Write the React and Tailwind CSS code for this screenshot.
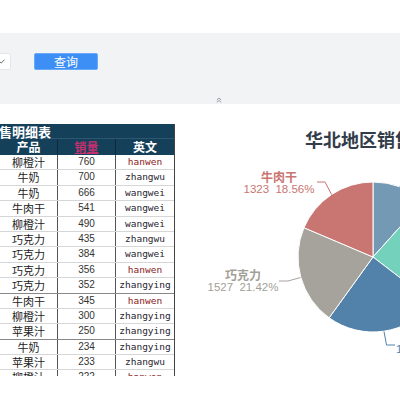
import React from "react";

const rows = [
  ["柳橙汁", 760, "hanwen"],
  ["牛奶", 700, "zhangwu"],
  ["牛奶", 666, "wangwei"],
  ["牛肉干", 541, "wangwei"],
  ["柳橙汁", 490, "wangwei"],
  ["巧克力", 435, "zhangwu"],
  ["巧克力", 384, "wangwei"],
  ["巧克力", 356, "hanwen"],
  ["巧克力", 352, "zhangying"],
  ["牛肉干", 345, "hanwen"],
  ["柳橙汁", 300, "zhangying"],
  ["苹果汁", 250, "zhangying"],
  ["牛奶", 234, "zhangying"],
  ["苹果汁", 233, "zhangwu"],
  ["柳橙汁", 222, "hanwen"],
];

// pie slices, angles clockwise from 12 o'clock
const slices = [
  { from: 0, to: 42, color: "#7499b4" },
  { from: 42, to: 127.5, color: "#74d1bc" },
  { from: 127.5, to: 215.8, color: "#5282aa" },
  { from: 215.8, to: 293, color: "#a5a39b" },
  { from: 293, to: 360, color: "#c97571" },
];

const CX = 193;
const CY = 153;
const R = 75;

function pt(angle, r = R) {
  const a = (angle * Math.PI) / 180;
  return [CX + r * Math.sin(a), CY - r * Math.cos(a)];
}

function slicePath(s) {
  const [x1, y1] = pt(s.from);
  const [x2, y2] = pt(s.to);
  const large = s.to - s.from > 180 ? 1 : 0;
  return `M${CX} ${CY} L${x1} ${y1} A${R} ${R} 0 ${large} 1 ${x2} ${y2} Z`;
}

function Chart() {
  return (
    <svg width="220" height="296" className="block">
      <text x="125" y="43" fontSize="18" fontWeight="700" fill="#333d4a" fontFamily="'Noto Sans CJK SC', sans-serif">
        华北地区销售情况
      </text>
      {slices.map((s) => (
        <path key={s.from} d={slicePath(s)} fill={s.color} stroke="#fff" strokeWidth="1" />
      ))}
      {/* label lines */}
      <polyline points="151.6,90.5 145,78 137,78" fill="none" stroke="#c97571" strokeWidth="1" />
      <polyline points="120.5,173.5 108,177 99,177" fill="none" stroke="#a5a39b" strokeWidth="1" />
      <polyline points="204,227.5 206.5,241 215,241" fill="none" stroke="#5282aa" strokeWidth="1" />
      <polyline points="220,83 223,71" fill="none" stroke="#7499b4" strokeWidth="1" />
      {/* labels */}
      <g textAnchor="middle">
        <text x="99" y="78" fontSize="12" fontWeight="700" fill="#c97571" fontFamily="'Noto Sans CJK SC', sans-serif">牛肉干</text>
        <text x="99" y="89" fontSize="11.5" fill="#c97571" fontFamily="'Liberation Sans', sans-serif" xmlSpace="preserve">1323  18.56%</text>
        <text x="63" y="176" fontSize="12" fontWeight="700" fill="#a29f97" fontFamily="'Noto Sans CJK SC', sans-serif">巧克力</text>
        <text x="63" y="187" fontSize="11.5" fill="#a29f97" fontFamily="'Liberation Sans', sans-serif" xmlSpace="preserve">1527  21.42%</text>
      </g>
      <text x="216" y="249" fontSize="11.5" fill="#5282aa" fontFamily="'Liberation Sans', sans-serif" xmlSpace="preserve">1750  24.55%</text>
    </svg>
  );
}

function DataTable() {
  return (
    <div className="w-[175px] h-[252px] overflow-hidden border-r border-[#444]">
      <div className="h-[15px] bg-[#15405a] text-white text-[13px] font-bold leading-[15px] whitespace-nowrap border-b border-[#2c5671]">
        <span className="ml-[-14px]">销售明细表</span>
      </div>
      <div className="grid grid-cols-[58px_58px_58px] h-[16px] bg-[#15405a] text-[12px] font-bold leading-[16px] text-center">
        <div className="text-white border-r border-[#0d2a3d]">产品</div>
        <div className="text-[#c2306f] underline border-r border-[#0d2a3d]">销量</div>
        <div className="text-white">英文</div>
      </div>
      {rows.map((r, i) => (
        <div
          key={i}
          className={`grid grid-cols-[58px_58px_58px] h-[15.4px] text-center border-b ${
            i === 8 || i === 11 ? "border-[#888]" : "border-[#d6d6d6]"
          }`}
        >
          <div className="text-[11px] leading-[14px] text-[#222] border-r border-[#555]">{r[0]}</div>
          <div className="text-[10px] leading-[14px] text-[#333] border-r border-[#555]" style={{ fontFamily: "'Liberation Sans', sans-serif" }}>
            {r[1]}
          </div>
          <div
            className={`text-[9.5px] leading-[14px] ${r[2] === "hanwen" ? "text-[#8a1c1c]" : "text-[#1f2430]"}`}
            style={{ fontFamily: "'DejaVu Sans Mono', monospace" }}
          >
            {r[2]}
          </div>
        </div>
      ))}
    </div>
  );
}

export default function App() {
  return (
    <div className="w-[400px] h-[400px] overflow-hidden bg-white" style={{ fontFamily: "'Noto Sans CJK SC', sans-serif" }}>
      <div className="h-[33px]" />

      {/* Query bar */}
      <div className="h-[71px] bg-[#f2f3f5] flex flex-col">
        <div className="flex items-center pt-[20px] h-[37px]">
          <div className="ml-[-100px] w-[111px] h-[17px] bg-white border border-[#e4e7ed] rounded-[2px] flex items-center justify-end pr-[5px]">
            <svg width="6" height="5" viewBox="0 0 6 5">
              <polyline points="0.5,2.5 2.2,4 5.5,0.8" fill="none" stroke="#606266" strokeWidth="1" />
            </svg>
          </div>
          <button className="ml-[23px] w-[64px] h-[17px] bg-[#3d8ef5] border border-[#6aa8f8] rounded-[2px] text-white text-[12px] leading-[15px]">
            查询
          </button>
        </div>
        <div className="flex-1" />
        <div className="pl-[216px] pb-[1px] leading-none">
          <svg width="6" height="6" viewBox="0 0 6 6">
            <polyline points="0.8,3 3,1 5.2,3" fill="none" stroke="#8d9199" strokeWidth="0.9" />
            <polyline points="0.8,5.4 3,3.4 5.2,5.4" fill="none" stroke="#8d9199" strokeWidth="0.9" />
          </svg>
        </div>
      </div>

      {/* Content */}
      <div className="flex">
        <div className="pt-[20px]">
          <DataTable />
        </div>
        <div className="ml-[5px]">
          <Chart />
        </div>
      </div>
    </div>
  );
}
